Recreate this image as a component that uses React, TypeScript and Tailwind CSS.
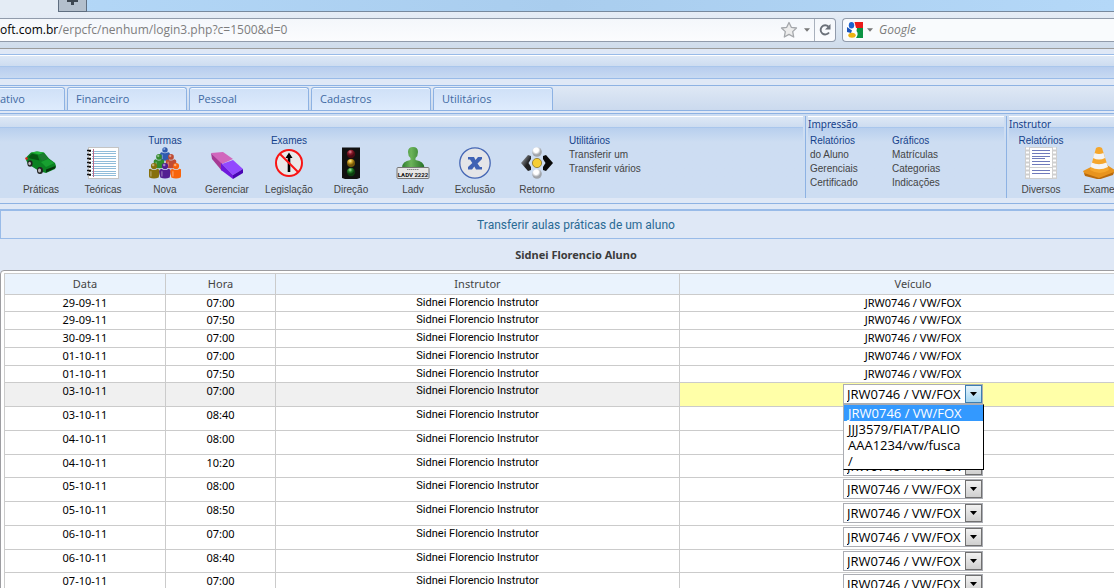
import React from "react";

const VEHICLE = "JRW0746 / VW/FOX";
const OPTIONS = [VEHICLE, "JJJ3579/FIAT/PALIO", "AAA1234/vw/fusca", "/"];

type Lesson = { date: string; time: string; state: "done" | "open" | "pending" };

const lessons: Lesson[] = [
  { date: "29-09-11", time: "07:00", state: "done" },
  { date: "29-09-11", time: "07:50", state: "done" },
  { date: "30-09-11", time: "07:00", state: "done" },
  { date: "01-10-11", time: "07:00", state: "done" },
  { date: "01-10-11", time: "07:50", state: "done" },
  { date: "03-10-11", time: "07:00", state: "open" },
  { date: "03-10-11", time: "08:40", state: "pending" },
  { date: "04-10-11", time: "08:00", state: "pending" },
  { date: "04-10-11", time: "10:20", state: "pending" },
  { date: "05-10-11", time: "08:00", state: "pending" },
  { date: "05-10-11", time: "08:50", state: "pending" },
  { date: "06-10-11", time: "07:00", state: "pending" },
  { date: "06-10-11", time: "08:40", state: "pending" },
  { date: "07-10-11", time: "07:00", state: "pending" },
];

function CarIcon() {
  return (
    <svg viewBox="0 0 32 32" className="size-8" aria-hidden="true">
      <path d="M1.500 10L6 5.500L12 4.500L19 5.500L24 11.500L30 16L31 19L30 22L21 26L14 24L3 17L1 13Z" fill="#0b8222" />
      <path d="M6 5.500L12 4.500L19 5.500L14 7.500Z" fill="#23b53a" />
      <path d="M14 8L19 6.500L23 11.500L17 14Z" fill="#1d7a31" />
      <path d="M3.500 10L7 6.800L12.500 8L14.500 13.500L5 11.500Z" fill="#055512" />
      <path d="M16 15L23 12L29.500 16L21 20Z" fill="#18a030" />
      <path d="M21 22.500L30.500 19L30.500 21L21 25.500Z" fill="#06350b" />
      <circle cx="1.500" cy="11.500" r="1.300" fill="#e0281c" />
      <ellipse cx="5" cy="16.500" rx="2.600" ry="3.200" fill="#222" />
      <ellipse cx="4.600" cy="16.500" rx="1.300" ry="1.800" fill="#bbb" />
      <ellipse cx="15" cy="23.500" rx="3" ry="3.500" fill="#222" />
      <ellipse cx="14.500" cy="23.500" rx="1.500" ry="2" fill="#bbb" />
    </svg>
  );
}

function NotebookIcon() {
  const lines = [4, 6, 9, 11, 14, 16, 19, 21, 24, 26, 28];
  const rings = [3, 7, 11, 15, 19, 23, 27];
  return (
    <svg viewBox="0 0 32 32" className="size-8" aria-hidden="true">
      <rect x="1.500" y=".5" width="30" height="31" fill="#fff" stroke="#c4c4c4" />
      {lines.map((y) => (
        <path key={y} d={`M5 ${y + 0.5}H29`} stroke="#90bcd9" />
      ))}
      <path d="M6.500 2V30" stroke="#b86a8b" />
      {rings.map((y) => (
        <path key={y} d={`M0 ${y + 0.5}H4M3 ${y + 1}V${y + 2}`} stroke="#111" strokeWidth="1.400" />
      ))}
    </svg>
  );
}

function Person({ x, y, fill, s }: { x: number; y: number; fill: string; s: number }) {
  return (
    <g transform={`translate(${x} ${y}) scale(${s})`}>
      <path d="M-3.500 3.500Q-6 4-5.500 7L-4.500 12Q0 14 4.500 12L5.500 7Q6 4 3.500 3.500Q0 6-3.500 3.500Z" fill={fill} />
      <circle cx="0" cy="1" r="3" fill={fill} />
      <circle cx="-.8" cy="0" r="1.200" fill="#fff" opacity=".45" />
      <path d="M-3 6V11" stroke="#fff" opacity=".3" strokeWidth="1.500" />
    </g>
  );
}

function GroupIcon() {
  return (
    <svg viewBox="0 0 32 32" className="size-8" aria-hidden="true">
      <Person x={16} y={2} s={0.9} fill="#2f5bb0" />
      <Person x={10} y={9} s={0.95} fill="#338a2b" />
      <Person x={22} y={9} s={0.95} fill="#bf4c33" />
      <Person x={5} y={18} s={1.04} fill="#87700c" />
      <Person x={16} y={18} s={1.04} fill="#531f92" />
      <Person x={27} y={18} s={1.04} fill="#f8640c" />
    </svg>
  );
}

function EraserIcon() {
  return (
    <svg viewBox="0 0 32 32" className="size-8" aria-hidden="true">
      <path d="M0 6L11 16V24L1 12Z" fill="#a63a94" />
      <path d="M0 6L12 5L22 12L11 17Z" fill="#d167bd" />
      <path d="M11 17L22 13L32 22L22 28Z" fill="#9248ff" />
      <path d="M10 16L22 28V32L10 23Z" fill="#6f18dd" />
      <path d="M22 28L32 22V26L22 32Z" fill="#4a04b4" />
    </svg>
  );
}

function NoEntryIcon() {
  return (
    <svg viewBox="0 0 32 32" className="size-8" aria-hidden="true">
      <circle cx="16" cy="16" r="13" fill="#e9e9e9" stroke="#f91414" strokeWidth="2" />
      <path d="M16 25V8" stroke="#000" strokeWidth="2.600" />
      <path d="M12.500 11L16 5.500L19.500 11Z" fill="#000" />
      <path d="M7 7L25 25" stroke="#f91414" strokeWidth="2" />
    </svg>
  );
}

function TrafficLightIcon() {
  return (
    <svg viewBox="0 0 32 32" className="size-8" aria-hidden="true">
      <defs>
        <radialGradient id="lampRed" cx=".4" cy=".25"><stop stopColor="#e28c9a" /><stop offset=".5" stopColor="#8e1c2c" /><stop offset="1" stopColor="#4c0a14" /></radialGradient>
        <radialGradient id="lampYellow" cx=".4" cy=".25"><stop stopColor="#fff0a0" /><stop offset=".5" stopColor="#cfa326" /><stop offset="1" stopColor="#755509" /></radialGradient>
        <radialGradient id="lampGreen" cx=".4" cy=".25"><stop stopColor="#b5e6a8" /><stop offset=".5" stopColor="#27842c" /><stop offset="1" stopColor="#0b3d0f" /></radialGradient>
      </defs>
      <path d="M7 0.500H25V31L22 32H10L7 31Z" fill="#111" />
      <circle cx="16" cy="7" r="4.200" fill="url(#lampRed)" />
      <circle cx="16" cy="16" r="4" fill="url(#lampYellow)" />
      <circle cx="16" cy="25" r="4.200" fill="url(#lampGreen)" />
    </svg>
  );
}

function PlateIcon() {
  return (
    <svg viewBox="0 0 34 32" className="h-8 w-[34px]" aria-hidden="true">
      <defs>
        <linearGradient id="plateBody" x2="1"><stop stopColor="#2e7d2e" /><stop offset=".4" stopColor="#6cb45a" /><stop offset="1" stopColor="#256f27" /></linearGradient>
      </defs>
      <path d="M12 5Q12 0 17 0T22 5Q22 9 19.500 11V13Q28 14 28.500 21H6Q6 14 14.500 13V11Q12 9 12 5Z" fill="url(#plateBody)" />
      <rect x="1" y="20.500" width="32" height="11" rx="1" fill="#e6e6e6" stroke="#777" />
      <path d="M11 22.500H23" stroke="#888" strokeDasharray="1.500 .5" />
      <text x="17" y="29.500" textAnchor="middle" fontSize="6" fontWeight="700" fontFamily="Roboto, sans-serif" fill="#111">
        LADV 2222
      </text>
    </svg>
  );
}

function ExcludeIcon() {
  return (
    <svg viewBox="0 0 32 32" className="size-8" aria-hidden="true">
      <circle cx="16" cy="16" r="15.200" fill="#e4e5e8" stroke="#4466b4" strokeWidth="1.300" />
      <path d="M9 10H15L16.500 13L19 10H23V12L18.500 16.500L21 20H23V22.500H17L15.300 19.500L13 22.500H9V20L13.300 16L11 12.500H9Z" fill="#3f62b4" />
    </svg>
  );
}

function ReturnIcon() {
  return (
    <svg viewBox="0 0 32 32" className="size-8" aria-hidden="true">
      <defs>
        <radialGradient id="ballWhite" cx=".4" cy=".3"><stop offset=".5" stopColor="#fff" /><stop offset="1" stopColor="#a0a4aa" /></radialGradient>
        <linearGradient id="chevron" x2="1" y2="1"><stop stopColor="#b3bac2" /><stop offset=".6" stopColor="#222" /></linearGradient>
      </defs>
      <path d="M0 16L7 8L10 9V12L7.500 16L10 20V23L7 24Z" fill="url(#chevron)" />
      <path d="M32 16L25 8L22 9V12L24.500 16L22 20V23L25 24Z" fill="#0a0a0a" />
      <circle cx="16" cy="5" r="4.800" fill="url(#ballWhite)" />
      <circle cx="16" cy="27" r="4.800" fill="url(#ballWhite)" />
      <circle cx="16" cy="16" r="4.600" fill="#f6ce34" stroke="#8a7426" strokeWidth=".8" />
    </svg>
  );
}

function ReportIcon() {
  const holes = [1, 5, 9, 13, 17, 21, 25, 29];
  return (
    <svg viewBox="0 0 32 32" className="size-8" aria-hidden="true">
      <rect width="32" height="32" fill="#cfcfcf" />
      {holes.map((y) => (
        <path key={y} d={`M1 ${y + 0.5}H4M28 ${y + 0.5}H31`} stroke="#fff" strokeWidth="2" />
      ))}
      <rect x="5" y="1" width="22" height="19" fill="#fff" />
      <rect x="5" y="21" width="22" height="10" fill="#fff" />
      <path d="M7 3.500H25M7 6.500H25M7 9.500H25M7 11.500H20M7 14.500H25M7 17.500H25M7 23.500H25M7 26.500H25" stroke="#6f7abb" />
    </svg>
  );
}

function ConeIcon() {
  return (
    <svg viewBox="0 0 32 32" className="size-8 shrink-0" aria-hidden="true">
      <path d="M0 24L12 18H24L32 23L30 27L16 32L2 28Z" fill="#e8941e" />
      <path d="M1 26L16 31L31 25L30 28L16 32.500L2 29Z" fill="#b96a0c" />
      <path d="M13 1Q16-1 19 1L26 23Q17 29 7 23Z" fill="#f5a62c" />
      <path d="M11.500 6Q16 8 20.500 6L22 11Q16 14 10 11Z" fill="#f4f4f4" />
      <path d="M8.500 15.500Q16 19 23.500 15.500L25 20Q16 24.500 7.500 20Z" fill="#f4f4f4" />
    </svg>
  );
}

const tools = [
  { label: "Práticas", Icon: CarIcon },
  { label: "Teóricas", Icon: NotebookIcon },
  { title: "Turmas", label: "Nova", Icon: GroupIcon },
  { label: "Gerenciar", Icon: EraserIcon },
  { title: "Exames", label: "Legislação", Icon: NoEntryIcon },
  { label: "Direção", Icon: TrafficLightIcon },
  { label: "Ladv", Icon: PlateIcon },
  { label: "Exclusão", Icon: ExcludeIcon },
  { label: "Retorno", Icon: ReturnIcon },
];

function Tool({ title, label, Icon, width = "w-[62px]" }: { title?: string; label: string; Icon: () => React.ReactElement; width?: string }) {
  return (
    <button className={`flex shrink-0 flex-col items-center whitespace-nowrap ${width}`}>
      <span className="h-[13px] leading-[14px] text-[#15428b]">{title}</span>
      <Icon />
      <span className="mt-1 leading-[14px]">{label}</span>
    </button>
  );
}

function LinkColumn({ title, links }: { title: string; links: string[] }) {
  return (
    <div className="flex flex-col whitespace-nowrap leading-[14px]">
      <span className="text-[#15428b]">{title}</span>
      {links.map((l) => (
        <a key={l} href="#">{l}</a>
      ))}
    </div>
  );
}

function RibbonGroup({ caption, className, children }: { caption?: string; className: string; children: React.ReactNode }) {
  return (
    <section className={`flex flex-col overflow-hidden ${className}`}>
      <h2 className="h-[11px] border-t border-white bg-linear-to-b from-[#dde8f5] to-[#cddcf0] text-[10px] leading-[15px] text-[#15428b] font-['Noto_Sans',sans-serif]">
        <span className="relative">{caption}</span>
      </h2>
      <div className="flex h-[71px] border-t border-[#a9c6ec] bg-linear-to-b from-[#b8cfee] to-[#cdddf2] to-20% pt-1.5">
        {children}
      </div>
    </section>
  );
}

function Caret({ className }: { className: string }) {
  return (
    <svg viewBox="0 0 7 4" className={`h-1 ${className}`} aria-hidden="true">
      <path d="M0 0H7L3.500 4Z" fill="currentColor" />
    </svg>
  );
}

function VehicleSelect({ lesson }: { lesson: Lesson }) {
  const open = lesson.state === "open";
  return (
    <div className="relative mx-auto mt-px w-[140px] text-left text-[13px] font-['Open_Sans',sans-serif]">
      <select
        aria-label={`Veículo ${lesson.date} ${lesson.time}`}
        className="block h-5 w-full appearance-none border border-[#abadb3] bg-white pl-[3px] text-black outline-none"
      >
        {OPTIONS.map((o) => (
          <option key={o}>{o}</option>
        ))}
      </select>
      <span
        className={`pointer-events-none absolute top-px right-px flex h-[18px] w-[17px] items-center justify-center border ${
          open ? "border-[#3c7fb1] bg-linear-to-b from-[#e5f4fc] to-[#a3d6f2]" : "border-[#707070] bg-linear-to-b from-[#f2f2f2] to-[#cfcfcf]"
        }`}
      >
        <Caret className="w-[7px] text-black" />
      </span>
      {open && (
        <ul role="listbox" className="absolute top-5 left-0 z-10 h-[66px] w-[141px] border border-black border-t-[#abadb3] border-l-[#abadb3] bg-white leading-4">
          {OPTIONS.map((o, i) => (
            <li key={o} role="option" aria-selected={i === 0} className={`whitespace-nowrap pl-[4px] ${i === 0 ? "bg-[#3399ff] text-white" : ""}`}>
              {o}
            </li>
          ))}
        </ul>
      )}
    </div>
  );
}

function Browser() {
  return (
    <header>
      <div className="flex h-3 border-b border-[#77899e] bg-linear-to-r from-[#b4d8f8] via-[#a9cdee] to-[#b4d8f8]">
        <div className="h-3 w-[58px] bg-[#e4ecf5]" />
        <button aria-label="Nova aba" className="flex h-3 w-[29px] justify-center border-r border-b border-l border-[#5f6e80] bg-[#b3bfcc]">
          <svg viewBox="0 0 11 6" className="h-1.5 w-[11px]" aria-hidden="true">
            <path d="M0 0H11V2H7V5H4V2H0Z" fill="#3d4650" />
          </svg>
        </button>
      </div>
      <div className="flex h-[37px] items-center gap-1.5 border-b border-[#9b9b9b] bg-linear-to-b from-[#e6edf6] to-[#cfdceb] text-[12px] font-['Open_Sans',sans-serif]">
        <div className="flex h-6 flex-1 items-center rounded-r-[4px] border border-l-0 border-[#919bab] bg-linear-to-b from-[#f4f7fb] to-[#fbfcfe]">
          <div role="textbox" aria-label="Endereço" className="flex-1 whitespace-nowrap text-[#7d7d7d]">
            <span className="text-black">oft.com.br</span>/erpcfc/nenhum/login3.php?c=1500&amp;d=0
          </div>
          <button aria-label="Favoritos">
            <svg viewBox="0 0 18 18" className="size-[18px]" aria-hidden="true">
              <path d="M9 1.500L11.300 6.300L16.500 7L12.700 10.600L13.700 16L9 13.400L4.300 16L5.300 10.600L1.500 7L6.700 6.300Z" fill="#ececec" stroke="#a4a7ab" strokeWidth="1.300" strokeLinejoin="round" />
            </svg>
          </button>
          <Caret className="mr-1 ml-1.5 w-[6px] text-[#777]" />
          <button aria-label="Recarregar" className="flex h-full w-[21px] items-center justify-center border-l border-[#a9b1bd]">
            <svg viewBox="0 0 14 14" className="size-[14px]" aria-hidden="true">
              <path d="M10.500 3.600A4.600 4.600 0 1 0 11 9.500" fill="none" stroke="#6a7079" strokeWidth="1.900" />
              <path d="M12.500 1V6.500H7Z" fill="#6a7079" />
            </svg>
          </button>
        </div>
        <div className="flex h-6 w-[272px] items-center rounded-l-[4px] border border-r-0 border-[#919bab] bg-[#f9fbfd] pl-1">
          <svg viewBox="0 0 16 16" className="size-4" aria-hidden="true">
            <rect width="16" height="16" fill="#fff" />
            <path d="M7.500 0H16V6H9Z" fill="#ea1b1b" />
            <path d="M10 6H16V16H9Q12 12 9.500 9Z" fill="#0b9444" />
            <path d="M0 5L5 8.500L4 11L0 10Z" fill="#1b55ba" />
            <ellipse cx="4.500" cy="3.300" rx="2.700" ry="3.300" fill="#1b62cf" />
            <ellipse cx="5" cy="13.300" rx="3.700" ry="2.500" fill="#edb313" />
          </svg>
          <Caret className="mx-1 w-[6px] text-[#777]" />
          <input aria-label="Pesquisar" placeholder="Google" className="min-w-0 flex-1 pl-0.5 italic outline-none placeholder:text-[#7b7b7b]" />
        </div>
      </div>
    </header>
  );
}

export default function App() {
  return (
    <div className="h-screen overflow-hidden bg-[#dfe8f6] text-[11px] text-black font-['Noto_Sans',sans-serif]">
      <Browser />

      <div className="mt-[5px] h-[25px] border-y border-[#99bbe8]">
        <div className="h-[11px] border-t border-white bg-linear-to-b from-[#dde8f6] to-[#cddcf0]" />
        <div className="h-3 border-t border-[#a9c6ec] bg-linear-to-b from-[#b7cdee] to-[#c8daf2]" />
      </div>

      <nav className="mt-1.5 flex h-[26px] gap-0.5 border-y border-[#8db2e3] bg-linear-to-b from-[#dfe8f5] to-[#cbdaee] pt-px">
        {["ativo", "Financeiro", "Pessoal", "Cadastros", "Utilitários"].map((t, i) => (
          <a
            key={t}
            href="#"
            className={`rounded-t-[3px] border border-b-0 border-[#8db2e3] bg-linear-to-b from-[#cfe0f7] to-[#deebfd] leading-[22px] text-[#416aa3] inset-shadow-[0_1px_0_#f4f9ff] font-['Open_Sans',sans-serif] ${
              i === 0 ? "w-[65px] rounded-tl-none border-l-0" : "w-[120px] pl-2"
            }`}
          >
            {t}
          </a>
        ))}
      </nav>

      <div className="mt-0.5 border-t border-b border-[#8db2e3] bg-[#dfe8f6] pb-[5px]">
        <div className="flex bg-[#cdddf2] pt-0.5 text-[10px] text-[#444] font-['Liberation_Sans',sans-serif]">
          <RibbonGroup className="flex-1">
            <div className="flex pl-2.5">
              {tools.map((t) => (
                <Tool key={t.label} {...t} />
              ))}
              <div className="pl-px">
                <LinkColumn title="Utilitários" links={["Transferir um", "Transferir vários"]} />
              </div>
            </div>
          </RibbonGroup>
          <RibbonGroup caption="Impressão" className="ml-0.5 w-[199px] border-l border-[#8db2e3] pl-0.5">
            <div className="grid w-full grid-cols-[82px_1fr] pl-0.5">
              <LinkColumn title="Relatórios" links={["do Aluno", "Gerenciais", "Certificado"]} />
              <LinkColumn title="Gráficos" links={["Matrículas", "Categorias", "Indicações"]} />
            </div>
          </RibbonGroup>
          <RibbonGroup caption="Instrutor" className="ml-0.5 w-[108px] border-l border-[#8db2e3] pl-0.5">
            <div className="flex pl-px">
              <Tool title="Relatórios" label="Diversos" Icon={ReportIcon} />
              <Tool label="Exame" Icon={ConeIcon} width="w-14 -ml-px" />
            </div>
          </RibbonGroup>
        </div>
      </div>

      <main className="mt-[5px] w-[calc(100%+38px)]">
        <h1 className="h-[30px] border border-t-2 border-[#99bbe8] text-center text-[12px] leading-[28px] text-[#2a6a94] font-['Roboto',sans-serif]">
          Transferir aulas práticas de um aluno
        </h1>
        <h2 className="h-[31px] text-center font-bold leading-[32px] text-[#3b3b3b]">Sidnei Florencio Aluno</h2>
        <div className="rounded-tl-[4px] border border-[#9d9da1] bg-white pt-0.5 pl-[3px] pr-1">
          <table className="w-full table-fixed border-collapse text-center">
            <colgroup>
              <col className="w-[161px]" />
              <col className="w-[110px]" />
              <col className="w-[404px]" />
              <col />
            </colgroup>
            <thead>
              <tr className="h-[21px] bg-[#eaf3fd] text-[#444]">
                {["Data", "Hora", "Instrutor", "Veículo"].map((h) => (
                  <th key={h} className="border border-[#cbcbcb] p-0 font-normal leading-4">{h}</th>
                ))}
              </tr>
            </thead>
            <tbody>
              {lessons.map((l) => {
                const done = l.state === "done";
                const cell = `border border-[#cbcbcb] p-0 align-top leading-4 ${l.state === "open" ? "bg-[#f0f0f0]" : ""}`;
                return (
                  <tr key={l.date + l.time} className={done ? "h-[18px] [&:nth-child(4n+1)]:h-[17px]" : "h-6 [&:nth-child(4n+1)]:h-[23px]"}>
                    <td className={cell}>{l.date}</td>
                    <td className={cell}>{l.time}</td>
                    <td className={`${cell} font-['Roboto',sans-serif]`}>Sidnei Florencio Instrutor</td>
                    <td className={`border border-[#cbcbcb] p-0 align-top leading-4 ${l.state === "open" ? "bg-[#ffffa8]" : ""}`}>
                      {done ? VEHICLE : <VehicleSelect lesson={l} />}
                    </td>
                  </tr>
                );
              })}
            </tbody>
          </table>
        </div>
      </main>
    </div>
  );
}
